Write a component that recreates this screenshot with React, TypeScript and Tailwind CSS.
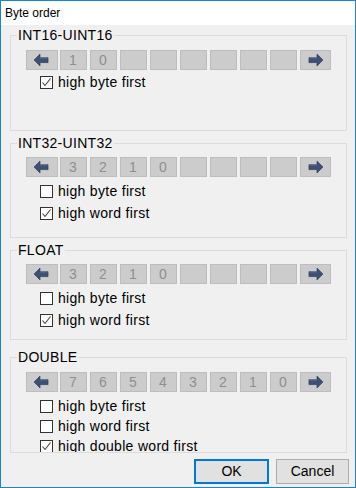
import type { ReactNode } from 'react';

const font = { fontFamily: '"Liberation Sans", Arial, sans-serif' };

const Arrow = ({ dir }: { dir: 'left' | 'right' }) => (
  <svg width="18" height="14" viewBox="0 0 18 14" style={dir === 'right' ? { transform: 'scaleX(-1)' } : undefined}>
    <path d="M2 8 L8 2.5 L8 5.5 L16 5.5 L16 10.5 L8 10.5 L8 13.5 Z" fill="#b5b5b5" opacity="0.7" />
    <path d="M1 7 L7 1 L7 4.5 L15 4.5 L15 9.5 L7 9.5 L7 13 Z" fill="#3e5173" stroke="#2c3b57" strokeWidth="0.6" />
    <path d="M7 4.8 L14.6 4.8" stroke="#7a8bab" strokeWidth="0.8" />
  </svg>
);

const ByteButtons = ({ digits }: { digits: string[] }) => {
  const cells = Array.from({ length: 8 }, (_, i) => digits[i] ?? '');
  return (
    <div className="flex h-[20px] shrink-0">
      <div className="flex w-[32px] items-center justify-center border border-[#bdbdbd] bg-[#cccccc]">
        <Arrow dir="left" />
      </div>
      <div className="ml-[2px] flex gap-[3px]">
        {cells.map((d, i) => (
          <div
            key={i}
            className="flex w-[27px] items-center justify-center border border-[#bdbdbd] bg-[#cccccc] text-[14px] text-[#8f8f8f]"
          >
            {d}
          </div>
        ))}
      </div>
      <div className="ml-[3px] flex w-[32px] items-center justify-center border border-[#bdbdbd] bg-[#cccccc]">
        <Arrow dir="right" />
      </div>
    </div>
  );
};

const Check = ({ label, checked, rowH }: { label: string; checked?: boolean; rowH: string }) => (
  <div className={`flex items-center pl-[14px] ${rowH}`}>
    <div className="flex h-[13px] w-[13px] shrink-0 items-center justify-center border border-[#333333] bg-white">
      {checked && (
        <svg width="11" height="11" viewBox="0 0 11 11">
          <path d="M1.5 5.5 L4 8.5 L9.5 1.5" fill="none" stroke="#404040" strokeWidth="1.1" />
        </svg>
      )}
    </div>
    <span className="ml-[5px] whitespace-nowrap text-[14px] leading-[16px] tracking-[0.3px] text-black">{label}</span>
  </div>
);

const Group = ({
  title,
  className,
  children,
}: {
  title: string;
  className: string;
  children: ReactNode;
}) => (
  <div className={`relative flex w-[337px] flex-col border border-[#dcdcdc] px-[15px] ${className}`}>
    <span className="absolute left-[6px] top-[-9px] bg-[#f0f0f0] px-[1px] text-[14px] leading-[16px] tracking-[0.3px] text-black">
      {title}
    </span>
    <div className="flex min-h-0 flex-1 flex-col overflow-hidden">{children}</div>
  </div>
);

export default function App() {
  return (
    <div className="flex h-[488px] w-[356px] flex-col border border-[#1883d7] bg-[#f0f0f0]" style={font}>
      <div className="flex h-[24px] shrink-0 items-center bg-white pl-[4px] text-[12px] text-black">Byte order</div>
      <div className="flex flex-col pl-[9px]">
        <Group title="INT16-UINT16" className="mt-[10px] h-[96px] pt-[14px]">
          <ByteButtons digits={['1', '0']} />
          <div className="mt-[1px]">
            <Check label="high byte first" checked rowH="h-[22px]" />
          </div>
        </Group>
        <Group title="INT32-UINT32" className="mt-[12px] h-[95px] pt-[13px]">
          <ByteButtons digits={['3', '2', '1', '0']} />
          <div className="mt-[3px]">
            <Check label="high byte first" rowH="h-[22px]" />
            <Check label="high word first" checked rowH="h-[22px]" />
          </div>
        </Group>
        <Group title="FLOAT" className="mt-[12px] h-[90px] pt-[13px]">
          <ByteButtons digits={['3', '2', '1', '0']} />
          <div className="mt-[3px]">
            <Check label="high byte first" rowH="h-[22px]" />
            <Check label="high word first" checked rowH="h-[22px]" />
          </div>
        </Group>
        <Group title="DOUBLE" className="mt-[17px] h-[96px] pt-[14px]">
          <ByteButtons digits={['7', '6', '5', '4', '3', '2', '1', '0']} />
          <div className="mt-[4px]">
            <Check label="high byte first" rowH="h-[20px]" />
            <Check label="high word first" rowH="h-[20px]" />
            <Check label="high double word first" checked rowH="h-[20px]" />
          </div>
        </Group>
        <div className="mt-[6px] flex justify-end gap-[7px] pr-[6px]">
          <button className="h-[25px] w-[75px] border-2 border-[#0078d7] bg-[#e1e1e1] text-[14px] text-black">OK</button>
          <button className="h-[25px] w-[73px] border border-[#adadad] bg-[#e1e1e1] text-[14px] text-black">Cancel</button>
        </div>
      </div>
    </div>
  );
}
